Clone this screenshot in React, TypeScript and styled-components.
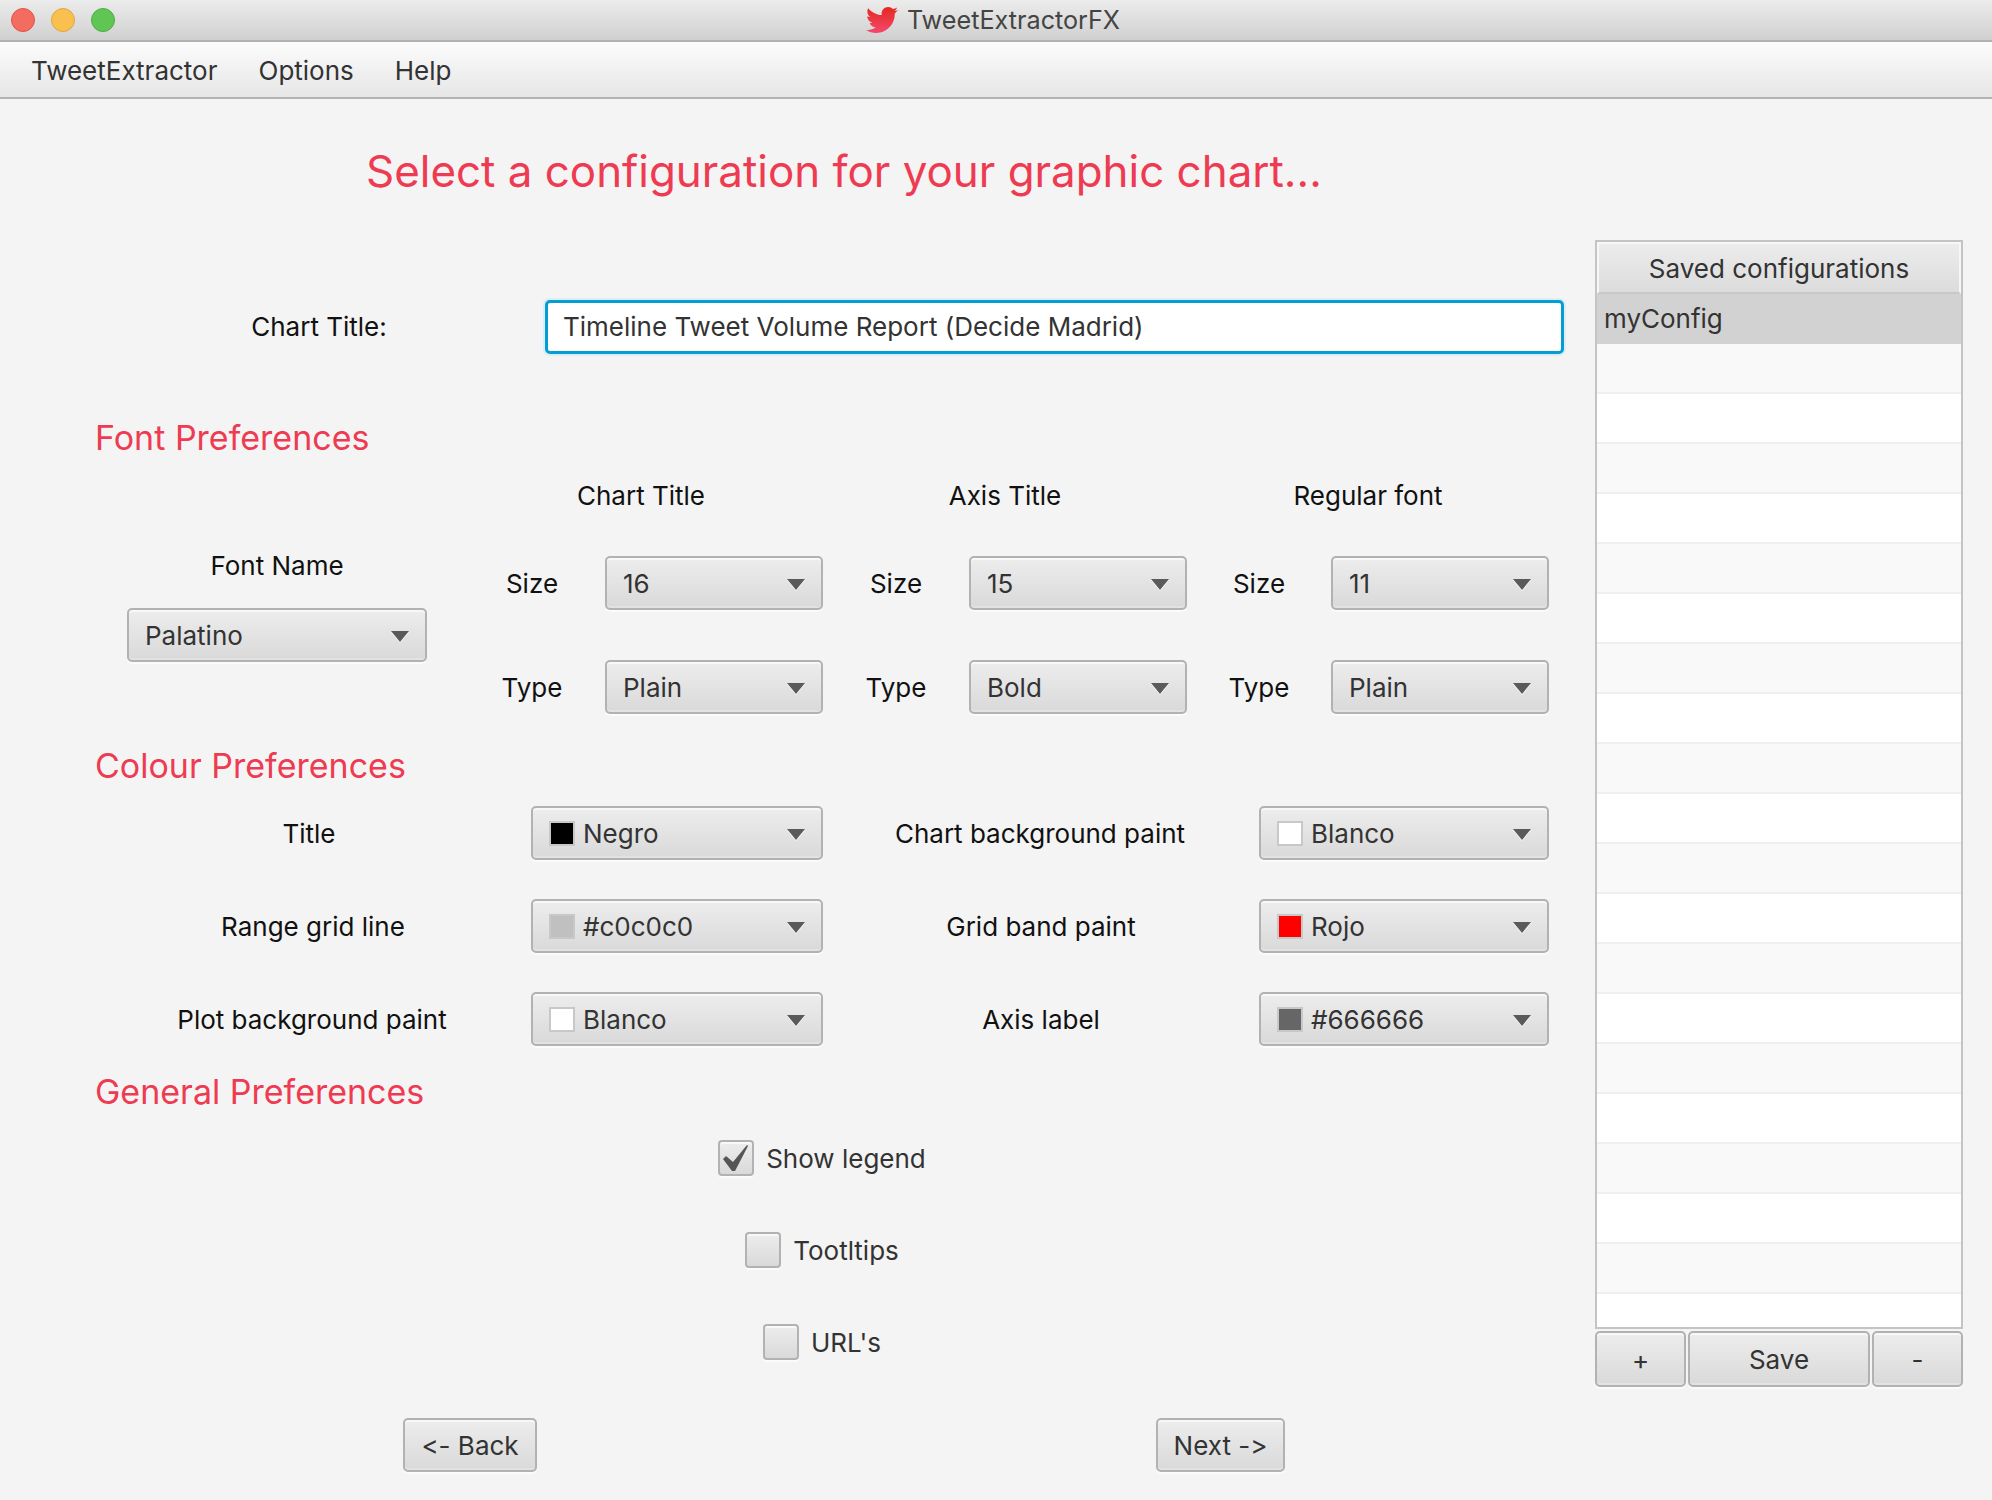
import React from 'react';
import styled, { createGlobalStyle } from 'styled-components';

const GlobalStyle = createGlobalStyle`
  html, body {
    margin: 0;
    padding: 0;
    background: #f4f4f4;
  }
  * {
    box-sizing: border-box;
  }
`;

const Window = styled.div`
  width: 1992px;
  height: 1500px;
  overflow: hidden;
  display: flex;
  flex-direction: column;
  background: #f4f4f4;
  font-family: Inter, 'Liberation Sans', sans-serif;
  font-size: 26px;
  font-variant-ligatures: none;
  font-feature-settings: 'calt' 0;
  color: #333;
`;

const TitleBar = styled.div`
  position: relative;
  height: 42px;
  flex: none;
  display: flex;
  align-items: center;
  justify-content: center;
  gap: 9px;
  padding-right: 6px;
  font-size: 25.2px;
  background: linear-gradient(#ececec, #d0d0d0);
  border-bottom: 2px solid #b1b1b1;
  color: #444;
`;

const Lights = styled.div`
  position: absolute;
  left: 11px;
  top: 8px;
  display: flex;
  gap: 16px;
`;

const Light = styled.span<{ $color: string; $edge: string }>`
  width: 24px;
  height: 24px;
  border-radius: 50%;
  background: ${(p) => p.$color};
  border: 1px solid ${(p) => p.$edge};
`;

const MenuBar = styled.div`
  height: 57px;
  flex: none;
  display: flex;
  align-items: center;
  gap: 41px;
  padding: 1px 31px 0;
  background: linear-gradient(#fcfcfc, #e6e6e6);
  border-bottom: 2px solid #b3b3b3;
`;

const Content = styled.div`
  flex: 1;
  display: flex;
`;

const Form = styled.div`
  width: 1595px;
  flex: none;
  padding-left: 95px;
  display: flex;
  flex-direction: column;
`;

const Headline = styled.h1`
  margin: 45px 0 0 271px;
  font-size: 43.9px;
  line-height: 54px;
  font-weight: 400;
  color: #ee3b52;
  white-space: nowrap;
`;

const Section = styled.h2<{ $top: number }>`
  margin: ${(p) => p.$top}px 0 0;
  font-size: 34px;
  line-height: 44px;
  font-weight: 400;
  color: #ee3b52;
`;

const Label = styled.div<{ $pad?: number }>`
  padding-right: ${(p) => p.$pad ?? 0}px;
  color: #111;
  text-align: center;
  white-space: nowrap;
`;

const TitleLabel = styled(Label)`
  padding-bottom: 2px;
`;

const TitleRow = styled.div`
  margin-top: 102px;
  display: grid;
  grid-template-columns: 448px 1019px;
  column-gap: 2px;
  align-items: center;
`;

const TextField = styled.div`
  height: 54px;
  padding: 0 15px 1px;
  display: flex;
  align-items: center;
  background: #fff;
  border: 3px solid #039ed3;
  border-radius: 5px;
  box-shadow: 0 0 0 2px #dcedf5;
`;

const FontGrid = styled.div`
  margin-top: 20px;
  display: grid;
  grid-template-columns: 364px 364px 364px 362px;
`;

const FontNameCol = styled.div`
  padding-top: 70px;
  display: flex;
  flex-direction: column;
  align-items: center;
  gap: 27px;
`;

const FontGroup = styled.div`
  display: grid;
  grid-template-columns: 1fr 218px;
  align-items: center;
`;

const GroupTitle = styled(Label)`
  grid-column: 1 / -1;
  height: 32px;
  line-height: 32px;
  margin-bottom: 44px;
`;

const RowGap = styled.div`
  grid-column: 1 / -1;
  height: 50px;
`;

const Select = styled.div<{ $width?: number }>`
  width: ${(p) => (p.$width ? `${p.$width}px` : '100%')};
  height: 54px;
  padding: 0 16px;
  display: flex;
  align-items: center;
  gap: 8px;
  background: linear-gradient(#ededed, #d9d9d9);
  border: 2px solid #b2b2b2;
  border-radius: 5px;
  box-shadow: inset 0 2px 0 #f8f8f8, inset 0 -2px 0 #e2e2e2, 0 2px 0 #fbfbfb;
  white-space: nowrap;
`;

const SelectText = styled.span`
  flex: 1;
`;

const Arrow = styled.span`
  flex: none;
  width: 0;
  height: 0;
  margin: 2px 0 0;
  border-left: 9px solid transparent;
  border-right: 9px solid transparent;
  border-top: 11px solid #5a5a5a;
  filter: drop-shadow(0 1px 0 #fff);
`;

const Swatch = styled.span<{ $color: string }>`
  flex: none;
  width: 26px;
  height: 25px;
  background: ${(p) => p.$color};
  border: 2px solid #c8c8c8;
`;

const ColourGrid = styled.div`
  margin-top: 18px;
  display: grid;
  grid-template-columns: 436px 292px 436px 290px;
  row-gap: 39px;
  align-items: center;
`;

const General = styled.div`
  margin-top: 26px;
  width: 1454px;
  display: flex;
  flex-direction: column;
  align-items: center;
  gap: 56px;
`;

const CheckRow = styled.div`
  display: flex;
  align-items: center;
  gap: 12px;
`;

const Box = styled.span`
  width: 36px;
  height: 36px;
  display: flex;
  align-items: center;
  justify-content: center;
  background: linear-gradient(#ededed, #d9d9d9);
  border: 2px solid #b2b2b2;
  border-radius: 4px;
  box-shadow: inset 0 2px 0 #f8f8f8, 0 2px 0 #fbfbfb;
`;

const NavRow = styled.div`
  margin-top: 58px;
  padding-left: 308px;
  display: flex;
  gap: 619px;
`;

const Button = styled.div<{ $width?: number; $height?: number }>`
  width: ${(p) => (p.$width ? `${p.$width}px` : 'auto')};
  height: ${(p) => p.$height ?? 54}px;
  flex: none;
  display: flex;
  align-items: center;
  justify-content: center;
  background: linear-gradient(#ededed, #d9d9d9);
  border: 2px solid #b2b2b2;
  border-radius: 5px;
  box-shadow: inset 0 2px 0 #f8f8f8, inset 0 -2px 0 #e2e2e2, 0 2px 0 #fbfbfb;
`;

const Side = styled.div`
  width: 368px;
  margin-top: 141px;
  display: flex;
  flex-direction: column;
`;

const Table = styled.div`
  height: 1089px;
  overflow: hidden;
  border: 2px solid #c4c4c4;
  background: #fff;
`;

const TableHead = styled.div`
  height: 52px;
  padding-top: 1px;
  display: flex;
  align-items: center;
  justify-content: center;
  background: linear-gradient(#ececec, #dcdcdc);
  border: 2px solid #f7f7f7;
  border-bottom: 2px solid #c8c8c8;
`;

const TableRow = styled.div<{ $odd: boolean; $selected: boolean }>`
  height: 50px;
  padding: 0 7px;
  display: flex;
  align-items: center;
  background: ${(p) => (p.$selected ? '#d2d2d2' : p.$odd ? '#f9f9f9' : '#fff')};
  border-bottom: 2px solid ${(p) => (p.$selected ? '#d2d2d2' : '#f0f0f0')};
`;

const ButtonRow = styled.div`
  margin-top: 2px;
  display: flex;
  gap: 2px;
`;

const BirdLogo = () => (
  <svg width="32" height="32" viewBox="0 0 512 512">
    <defs>
      <linearGradient id="bird" x1="0" y1="0" x2="0" y2="1">
        <stop offset="0" stopColor="#e5281f" />
        <stop offset="1" stopColor="#f4486c" />
      </linearGradient>
    </defs>
    <path
      fill="url(#bird)"
      d="M459.37 151.716c.325 4.548.325 9.097.325 13.645 0 138.72-105.583 298.558-298.558 298.558-59.452 0-114.68-17.219-161.137-47.106 8.447.974 16.568 1.299 25.34 1.299 49.055 0 94.213-16.568 130.274-44.832-46.132-.975-84.792-31.188-98.112-72.772 6.498.974 12.995 1.624 19.818 1.624 9.421 0 18.843-1.3 27.614-3.573-48.081-9.747-84.143-51.98-84.143-102.985v-1.299c13.969 7.797 30.214 12.67 47.431 13.319-28.264-18.843-46.781-51.005-46.781-87.391 0-19.492 5.197-37.36 14.294-52.954 51.655 63.675 129.3 105.258 216.365 109.807-1.624-7.797-2.599-15.918-2.599-24.04 0-57.828 46.782-104.934 104.934-104.934 30.213 0 57.502 12.67 76.67 33.137 23.715-4.548 46.456-13.32 66.599-25.34-7.798 24.366-24.366 44.833-46.132 57.827 21.117-2.273 41.584-8.122 60.426-16.243-14.292 20.791-32.161 39.308-52.628 54.253z"
    />
  </svg>
);

const CheckMark = () => (
  <svg width="26" height="27" viewBox="0 0 26 27">
    <path fill="#555" d="M0 14 L3 11 L10 17 L24 0 L25 1 L12 26 L9 26 Z" />
  </svg>
);

type DropdownProps = { value: string; swatch?: string; width?: number };

function Dropdown({ value, swatch, width }: DropdownProps) {
  return (
    <Select $width={width}>
      {swatch && <Swatch $color={swatch} />}
      <SelectText>{value}</SelectText>
      <Arrow />
    </Select>
  );
}

const fontGroups = [
  { title: 'Chart Title', size: '16', type: 'Plain' },
  { title: 'Axis Title', size: '15', type: 'Bold' },
  { title: 'Regular font', size: '11', type: 'Plain' },
];

const colourRows = [
  { left: 'Title', leftPad: 8, leftValue: 'Negro', leftColor: '#000', right: 'Chart background paint', rightPad: 2, rightValue: 'Blanco', rightColor: '#fff' },
  { left: 'Range grid line', leftPad: 0, leftValue: '#c0c0c0', leftColor: '#c0c0c0', right: 'Grid band paint', rightPad: 0, rightValue: 'Rojo', rightColor: '#f00' },
  { left: 'Plot background paint', leftPad: 2, leftValue: 'Blanco', leftColor: '#fff', right: 'Axis label', rightPad: 0, rightValue: '#666666', rightColor: '#666' },
];

const rows = Array.from({ length: 21 }, (_, i) => i);

export default function App() {
  return (
    <Window>
      <GlobalStyle />
      <TitleBar>
        <Lights>
          <Light $color="#f46b60" $edge="#e0534a" />
          <Light $color="#f9c04f" $edge="#e0a63c" />
          <Light $color="#60c653" $edge="#4dae42" />
        </Lights>
        <BirdLogo />
        TweetExtractorFX
      </TitleBar>
      <MenuBar>
        <span>TweetExtractor</span>
        <span>Options</span>
        <span>Help</span>
      </MenuBar>
      <Content>
        <Form>
          <Headline>Select a configuration for your graphic chart...</Headline>
          <TitleRow>
            <TitleLabel>Chart Title:</TitleLabel>
            <TextField>Timeline Tweet Volume Report (Decide Madrid)</TextField>
          </TitleRow>
          <Section $top={62}>Font Preferences</Section>
          <FontGrid>
            <FontNameCol>
              <Label>Font Name</Label>
              <Dropdown value="Palatino" width={300} />
            </FontNameCol>
            {fontGroups.map((g) => (
              <FontGroup key={g.title}>
                <GroupTitle>{g.title}</GroupTitle>
                <Label>Size</Label>
                <Dropdown value={g.size} />
                <RowGap />
                <Label>Type</Label>
                <Dropdown value={g.type} />
              </FontGroup>
            ))}
          </FontGrid>
          <Section $top={30}>Colour Preferences</Section>
          <ColourGrid>
            {colourRows.map((r) => (
              <React.Fragment key={r.left}>
                <Label $pad={r.leftPad}>{r.left}</Label>
                <Dropdown value={r.leftValue} swatch={r.leftColor} />
                <Label $pad={r.rightPad}>{r.right}</Label>
                <Dropdown value={r.rightValue} swatch={r.rightColor} />
              </React.Fragment>
            ))}
          </ColourGrid>
          <Section $top={24}>General Preferences</Section>
          <General>
            <CheckRow>
              <Box>
                <CheckMark />
              </Box>
              Show legend
            </CheckRow>
            <CheckRow>
              <Box />
              Tootltips
            </CheckRow>
            <CheckRow>
              <Box />
              URL's
            </CheckRow>
          </General>
          <NavRow>
            <Button $width={134}>&lt;- Back</Button>
            <Button $width={129}>Next -&gt;</Button>
          </NavRow>
        </Form>
        <Side>
          <Table>
            <TableHead>Saved configurations</TableHead>
            {rows.map((i) => (
              <TableRow key={i} $odd={i % 2 === 1} $selected={i === 0}>
                {i === 0 ? 'myConfig' : ''}
              </TableRow>
            ))}
          </Table>
          <ButtonRow>
            <Button $width={91} $height={56}>+</Button>
            <Button $width={182} $height={56}>Save</Button>
            <Button $width={91} $height={56}>-</Button>
          </ButtonRow>
        </Side>
      </Content>
    </Window>
  );
}
